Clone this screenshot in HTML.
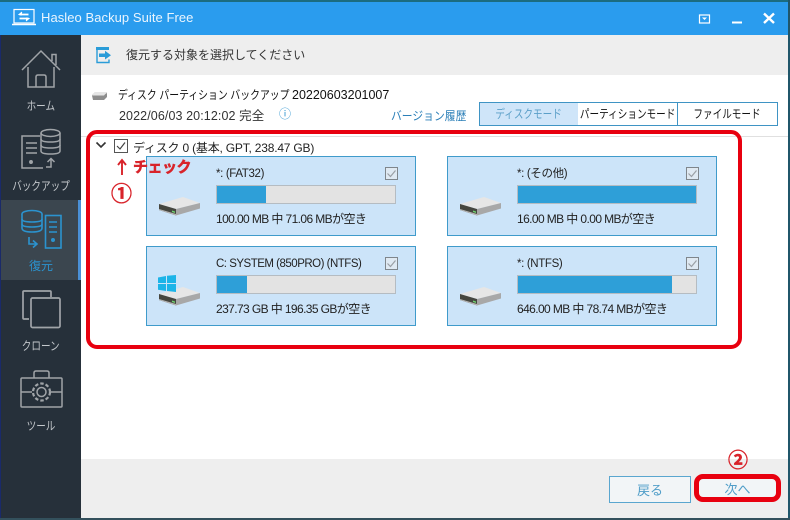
<!DOCTYPE html>
<html lang="ja">
<head>
<meta charset="utf-8">
<style>
html,body{margin:0;padding:0;}
body{width:790px;height:520px;position:relative;overflow:hidden;background:#fff;font-family:"Liberation Sans","Noto Sans CJK JP",sans-serif;font-size:12px;color:#222;}
.a{position:absolute;}
.t{position:absolute;white-space:nowrap;line-height:16px;}
.n{display:inline-block;transform-origin:left center;}
.card{position:absolute;width:268px;height:78px;background:#cce4f9;border:1px solid #3f9bcb;}
.bar{position:absolute;width:178px;height:17px;background:#e3e3e3;border:1px solid #b5bcc2;box-sizing:content-box;}
.fill{position:absolute;left:0;top:0;height:17px;background:#2e9fd8;}
.nav{position:absolute;left:1px;width:80px;text-align:center;color:#c4c8cc;font-size:12px;line-height:16px;}
.nav span{display:inline-block;transform:scaleX(.8);white-space:nowrap;}
.tab{position:absolute;top:102px;height:22px;line-height:22px;text-align:center;border:1px solid #3f94c4;color:#111;background:#fff;white-space:nowrap;overflow:hidden;}
.tab span{display:inline-block;transform:scaleX(.8);margin:0 -20px;}
.lbl{letter-spacing:-.35px;font-size:11.5px;color:#222;}
.sz{letter-spacing:-.6px;color:#222;}
.red{color:#d8232a;font-weight:bold;-webkit-text-stroke:.5px #d8232a;}
</style>
</head>
<body>
<!-- window frame -->
<div class="a" style="left:0;top:0;width:790px;height:2px;background:#1b6c80"></div>
<div class="a" style="left:0;top:2px;width:788px;height:33px;background:#2a9cee"></div>
<div class="a" style="left:788px;top:0;width:2px;height:520px;background:#20566a"></div>
<div class="a" style="left:0;top:35px;width:1px;height:485px;background:#1a2a6a"></div>
<div class="a" style="left:0;top:518px;width:790px;height:2px;background:#33505c"></div>

<!-- title bar -->
<svg class="a" style="left:11px;top:8px" width="26" height="20" viewBox="0 0 26 20" fill="none" stroke="#fff">
<rect x="3" y="1.5" width="20" height="13.5" stroke-width="1.2"/>
<path d="M1 16.5H25" stroke-width="1.4"/>
<path d="M8.5 6.5H17.5M8.5 10.5H17.5" stroke-width="1.8"/>
<path d="M11 4L8 6.5L11 7M15 13L18 10.5L15 10" fill="#fff" stroke-width="1"/>
</svg>
<div class="t" style="left:41px;top:10px;color:#eaf5fe;font-size:13px;letter-spacing:.06px">Hasleo Backup Suite Free</div>
<svg class="a" style="left:698px;top:10px" width="90" height="16" viewBox="0 0 90 16" fill="none" stroke="#fff">
<rect x="1.5" y="5" width="10" height="8" stroke-width="1.2"/>
<path d="M4 7.5H9L6.5 10Z" fill="#fff" stroke="none"/>
<path d="M34 12.5H44" stroke-width="2"/>
<path d="M66 3.5L76 13M76 3.5L66 13" stroke-width="2.4"/>
</svg>

<!-- sidebar -->
<div class="a" style="left:1px;top:35px;width:80px;height:483px;background:#26303a"></div>
<div class="a" style="left:1px;top:200px;width:77px;height:80px;background:#3b464f"></div>
<div class="a" style="left:78px;top:200px;width:3px;height:80px;background:#4a90d6"></div>

<svg class="a" style="left:19px;top:48px" width="44" height="42" viewBox="0 0 44 42" fill="none" stroke="#a0a4a8" stroke-width="1.5">
<path d="M3 22L22 3L41 22"/>
<path d="M33 13V6.5H37V17"/>
<path d="M9 19V39H35V19"/>
<path d="M17 39V29Q17 27 19 27H25Q27 27 27 29V39"/>
</svg>
<div class="nav" style="top:98px"><span>ホーム</span></div>

<svg class="a" style="left:19px;top:127px" width="44" height="44" viewBox="0 0 44 44" fill="none" stroke="#a0a4a8" stroke-width="1.5">
<path d="M21 9H3V41H24"/>
<path d="M7 16H18M7 21H18M7 26H18"/>
<circle cx="12" cy="35" r="1.2" fill="#a0a4a8"/>
<ellipse cx="31.5" cy="6" rx="9.5" ry="3.5"/>
<path d="M22 6V24Q22 27 31.5 27Q41 27 41 24V6"/>
<path d="M22 12Q22 15 31.5 15Q41 15 41 12M22 18Q22 21 31.5 21Q41 21 41 18"/>
<path d="M27 40H32V32M28.5 35L32 31.5L35.5 35"/>
</svg>
<div class="nav" style="top:178px"><span>バックアップ</span></div>

<svg class="a" style="left:19px;top:208px" width="44" height="44" viewBox="0 0 44 44" fill="none" stroke="#2b93cf" stroke-width="1.6">
<rect x="26.5" y="7.5" width="15.5" height="32.5"/>
<ellipse cx="13" cy="6" rx="10" ry="3.5" fill="#3b464f"/>
<path d="M3 6V20Q3 24 13 24Q23 24 23 20V6" fill="#3b464f"/>
<path d="M3 11Q3 14 13 14Q23 14 23 11M3 16Q3 19 13 19Q23 19 23 16"/>
<path d="M30 14H38M30 19H38M30 24H38"/>
<circle cx="34" cy="32" r="1.2" fill="#2b93cf"/>
<path d="M10 29V36H17M14 32.5L18 36L14 39.5"/>
</svg>
<div class="nav" style="top:258px;color:#2b93cf">復元</div>

<svg class="a" style="left:20px;top:288px" width="42" height="42" viewBox="0 0 42 42" fill="none" stroke="#a0a4a8" stroke-width="1.7">
<path d="M9 31H4Q3 31 3 30V4Q3 3 4 3H30Q31 3 31 4V9"/>
<rect x="11" y="10" width="29" height="29.5" rx="1.5"/>
</svg>
<div class="nav" style="top:338px"><span>クローン</span></div>

<svg class="a" style="left:19px;top:369px" width="44" height="40" viewBox="0 0 44 40" fill="none" stroke="#a0a4a8" stroke-width="1.5">
<rect x="2" y="9" width="41" height="29" rx="1"/>
<path d="M15 9V4Q15 2 17 2H28Q30 2 30 4V9"/>
<path d="M2 23H13M32 23H43"/>
<circle cx="22.5" cy="23" r="4.5"/>
<circle cx="22.5" cy="23" r="8.5" stroke-dasharray="3.5 2" stroke-width="2.2"/>
</svg>
<div class="nav" style="top:418px"><span>ツール</span></div>

<!-- header band -->
<div class="a" style="left:81px;top:35px;width:707px;height:40px;background:#eeeeee"></div>
<svg class="a" style="left:96px;top:47px" width="16" height="17" viewBox="0 0 16 17" fill="none">
<path d="M1 3V15.5H13V12.5" stroke="#2a9cd8" stroke-width="1.4"/>
<path d="M0 0H13V3H0Z" fill="#2a9cd8"/>
<path d="M3 6.5H9V3.8L15 8.3L9 12.5V10H3Z" fill="#2a9cd8"/>
</svg>
<div class="t" style="left:126px;top:47px;font-size:12px;color:#333">復元する対象を選択してください</div>

<!-- backup info -->
<svg class="a" style="left:91px;top:91px" width="17" height="10" viewBox="0 0 17 10">
<path d="M1 4L4 1H16V5L13 8H2Z" fill="#d4d4d4"/>
<path d="M1 4.5H12L16 2V6L13 9H2Z" fill="#8d8d8d"/>
<path d="M1 3.5L4 1H16L13 4.5H2Z" fill="#e6e6e6"/>
</svg>
<div class="t" style="left:118px;top:87px;color:#111"><span class="n" style="transform:scaleX(.82)">ディスク パーティション バックアップ</span></div>
<div class="t" style="left:292px;top:87px;color:#111;font-size:12.5px">20220603201007</div>
<div class="t" style="left:119px;top:108px;color:#333;font-size:12.5px;letter-spacing:.1px">2022/06/03 20:12:02 完全</div>
<div class="t" style="left:279px;top:106px;color:#2b93cf;font-size:12px">&#9432;</div>
<div class="t" style="left:391px;top:108px;color:#2b7fb8"><span class="n" style="transform:scaleX(.9)">バージョン履歴</span></div>

<div class="tab" style="left:479px;width:98px;background:#cfe5f9;color:#5b9fc8"><span>ディスクモード</span></div>
<div class="tab" style="left:578px;width:99px;border-left:0"><span>パーティションモード</span></div>
<div class="tab" style="left:678px;width:99px;border-left:0"><span>ファイルモード</span></div>

<div class="a" style="left:81px;top:136px;width:707px;height:1px;background:#e0e0e0"></div>

<!-- tree row -->
<svg class="a" style="left:95px;top:141px" width="12" height="9" viewBox="0 0 12 9" fill="none" stroke="#333" stroke-width="1.6"><path d="M1.5 1.5L6 6L10.5 1.5"/></svg>
<div class="a" style="left:114px;top:139px;width:12px;height:12px;border:1px solid #555;background:#fff"></div>
<svg class="a" style="left:114px;top:139px" width="14" height="14" viewBox="0 0 14 14" fill="none" stroke="#444" stroke-width="1.2"><path d="M3 7L6 10L11 3.5"/></svg>
<div class="t" style="left:133px;top:140px;color:#222;letter-spacing:-.2px">ディスク 0 (基本, GPT, 238.47 GB)</div>

<!-- cards -->
<div class="card" style="left:146px;top:156px"></div>
<div class="card" style="left:447px;top:156px"></div>
<div class="card" style="left:146px;top:246px"></div>
<div class="card" style="left:447px;top:246px"></div>

<div class="t lbl" style="left:216px;top:166px">*: (FAT32)</div>
<div class="t lbl" style="left:517px;top:166px">*: (その他)</div>
<div class="t lbl" style="left:216px;top:256px;letter-spacing:-.5px">C: SYSTEM (850PRO) (NTFS)</div>
<div class="t lbl" style="left:517px;top:256px">*: (NTFS)</div>

<div class="bar" style="left:216px;top:185px"><div class="fill" style="width:49px"></div></div>
<div class="bar" style="left:517px;top:185px"><div class="fill" style="width:178px"></div></div>
<div class="bar" style="left:216px;top:275px"><div class="fill" style="width:30px"></div></div>
<div class="bar" style="left:517px;top:275px"><div class="fill" style="width:154px"></div></div>

<div class="t sz" style="left:216px;top:211px">100.00 MB 中 71.06 MBが空き</div>
<div class="t sz" style="left:517px;top:211px">16.00 MB 中 0.00 MBが空き</div>
<div class="t sz" style="left:216px;top:301px">237.73 GB 中 196.35 GBが空き</div>
<div class="t sz" style="left:517px;top:301px">646.00 MB 中 78.74 MBが空き</div>

<!-- card checks -->
<svg class="a" style="left:385px;top:167px" width="14" height="14" viewBox="0 0 14 14"><rect x=".5" y=".5" width="12" height="12" fill="#dfe9f2" stroke="#7f868c"/><path d="M2.5 6.5L5.5 9.5L10.5 3.5" fill="none" stroke="#9a9fa4" stroke-width="1.2"/></svg>
<svg class="a" style="left:686px;top:167px" width="14" height="14" viewBox="0 0 14 14"><rect x=".5" y=".5" width="12" height="12" fill="#dfe9f2" stroke="#7f868c"/><path d="M2.5 6.5L5.5 9.5L10.5 3.5" fill="none" stroke="#9a9fa4" stroke-width="1.2"/></svg>
<svg class="a" style="left:385px;top:257px" width="14" height="14" viewBox="0 0 14 14"><rect x=".5" y=".5" width="12" height="12" fill="#dfe9f2" stroke="#7f868c"/><path d="M2.5 6.5L5.5 9.5L10.5 3.5" fill="none" stroke="#9a9fa4" stroke-width="1.2"/></svg>
<svg class="a" style="left:686px;top:257px" width="14" height="14" viewBox="0 0 14 14"><rect x=".5" y=".5" width="12" height="12" fill="#dfe9f2" stroke="#7f868c"/><path d="M2.5 6.5L5.5 9.5L10.5 3.5" fill="none" stroke="#9a9fa4" stroke-width="1.2"/></svg>

<!-- drive icons -->
<svg class="a" style="left:159px;top:194px" width="44" height="24" viewBox="0 0 44 24"><path d="M0 10L24 3L41 9L17 15Z" fill="#e6e6e6"/><path d="M0 10L17 15V21.5L0 16Z" fill="#45463f"/><path d="M0 15L17 20V21.5L0 16Z" fill="#b5b5b5"/><path d="M17 15L41 9V14.5L17 21.5Z" fill="#a8a8a8"/><path d="M13 16.5L16 17.5V19L13 18Z" fill="#6fd06f"/></svg>
<svg class="a" style="left:460px;top:194px" width="44" height="24" viewBox="0 0 44 24"><path d="M0 10L24 3L41 9L17 15Z" fill="#e6e6e6"/><path d="M0 10L17 15V21.5L0 16Z" fill="#45463f"/><path d="M0 15L17 20V21.5L0 16Z" fill="#b5b5b5"/><path d="M17 15L41 9V14.5L17 21.5Z" fill="#a8a8a8"/><path d="M13 16.5L16 17.5V19L13 18Z" fill="#6fd06f"/></svg>
<svg class="a" style="left:159px;top:284px" width="44" height="24" viewBox="0 0 44 24"><path d="M0 10L24 3L41 9L17 15Z" fill="#e6e6e6"/><path d="M0 10L17 15V21.5L0 16Z" fill="#45463f"/><path d="M0 15L17 20V21.5L0 16Z" fill="#b5b5b5"/><path d="M17 15L41 9V14.5L17 21.5Z" fill="#a8a8a8"/><path d="M13 16.5L16 17.5V19L13 18Z" fill="#6fd06f"/></svg>
<svg class="a" style="left:460px;top:284px" width="44" height="24" viewBox="0 0 44 24"><path d="M0 10L24 3L41 9L17 15Z" fill="#e6e6e6"/><path d="M0 10L17 15V21.5L0 16Z" fill="#45463f"/><path d="M0 15L17 20V21.5L0 16Z" fill="#b5b5b5"/><path d="M17 15L41 9V14.5L17 21.5Z" fill="#a8a8a8"/><path d="M13 16.5L16 17.5V19L13 18Z" fill="#6fd06f"/></svg>
<svg class="a" style="left:158px;top:275px" width="18" height="17" viewBox="0 0 18 17" fill="#1cb4e8"><path d="M0 2.5L8 1V8H0Z"/><path d="M9 .8L18 0V8H9Z"/><path d="M0 9H8V16L0 14.7Z"/><path d="M9 9H18V17L9 16Z"/></svg>

<!-- footer -->
<div class="a" style="left:81px;top:459px;width:707px;height:59px;background:#eeeeee"></div>
<div class="a" style="left:609px;top:476px;width:80px;height:25px;border:1px solid #5aa6cf;background:#f2f5f7;color:#4f9dc8;text-align:center;line-height:27px;font-size:13px">戻る</div>
<div class="a" style="left:698px;top:476px;width:79px;height:24px;background:#f2f5f7;color:#4f9dc8;text-align:center;line-height:27px;font-size:13px">次へ</div>

<!-- red annotations -->
<div class="a" style="left:86px;top:130px;width:648px;height:211px;border:4.5px solid #e8000f;border-radius:11px"></div>
<div class="a" style="left:694px;top:474px;width:77px;height:18px;border:5px solid #e8000f;border-radius:9px"></div>
<svg class="a" style="left:116px;top:158px" width="12" height="18" viewBox="0 0 12 18" fill="none" stroke="#d8232a" stroke-width="1.9"><path d="M6 17V2M2 7L6 2L10 7"/></svg>
<div class="t red" style="left:133px;top:159px;font-size:15px;line-height:18px;letter-spacing:-.5px">チェック</div>
<div class="t red" style="left:111px;top:184px;font-size:21px;line-height:22px">①</div>
<div class="t red" style="left:728px;top:450px;font-size:20px;line-height:22px">②</div>
</body>
</html>
